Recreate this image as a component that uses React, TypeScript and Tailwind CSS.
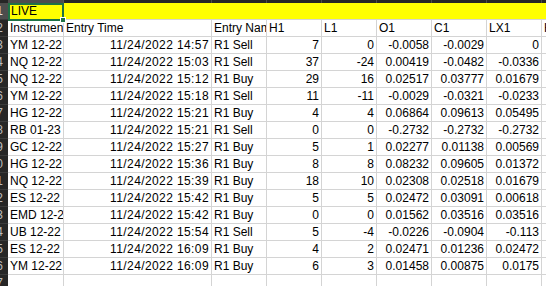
import React from "react";

const rows: string[][] = [
  ["YM 12-22", "11/24/2022 14:57", "R1 Sell", "7", "0", "-0.0058", "-0.0029", "0"],
  ["NQ 12-22", "11/24/2022 15:03", "R1 Sell", "37", "-24", "0.00419", "-0.0482", "-0.0336"],
  ["NQ 12-22", "11/24/2022 15:12", "R1 Buy", "29", "16", "0.02517", "0.03777", "0.01679"],
  ["YM 12-22", "11/24/2022 15:18", "R1 Sell", "11", "-11", "-0.0029", "-0.0321", "-0.0233"],
  ["HG 12-22", "11/24/2022 15:21", "R1 Buy", "4", "4", "0.06864", "0.09613", "0.05495"],
  ["RB 01-23", "11/24/2022 15:21", "R1 Sell", "0", "0", "-0.2732", "-0.2732", "-0.2732"],
  ["GC 12-22", "11/24/2022 15:27", "R1 Buy", "5", "1", "0.02277", "0.01138", "0.00569"],
  ["HG 12-22", "11/24/2022 15:36", "R1 Buy", "8", "8", "0.08232", "0.09605", "0.01372"],
  ["NQ 12-22", "11/24/2022 15:39", "R1 Buy", "18", "10", "0.02308", "0.02518", "0.01679"],
  ["ES 12-22", "11/24/2022 15:42", "R1 Buy", "5", "5", "0.02472", "0.03091", "0.00618"],
  ["EMD 12-22", "11/24/2022 15:42", "R1 Buy", "0", "0", "0.01562", "0.03516", "0.03516"],
  ["UB 12-22", "11/24/2022 15:54", "R1 Sell", "5", "-4", "-0.0226", "-0.0904", "-0.113"],
  ["ES 12-22", "11/24/2022 16:09", "R1 Buy", "4", "2", "0.02471", "0.01236", "0.02472"],
  ["YM 12-22", "11/24/2022 16:09", "R1 Buy", "6", "3", "0.01458", "0.00875", "0.0175"],
];

const headers = ["Instrument", "Entry Time", "Entry Name", "H1", "L1", "O1", "C1", "LX1", "HX1"];
const widths = ["w-[56px]", "w-[148px]", "w-[55px]", "w-[55px]", "w-[55px]", "w-[55px]", "w-[55px]", "w-[55px]", "w-[40px]"];

function RowHead({ n, active }: { n: number; active?: boolean }) {
  return (
    <div
      className={
        "w-[8px] shrink-0 h-full flex items-center justify-end overflow-hidden pr-[5px] text-[12px] leading-none border-b border-[#3a3a3a] " +
        (active ? "bg-[#4d4d4d] text-[#e8e8e8]" : "bg-[#262626] text-[#bdbdbd]")
      }
    >
      <span className="shrink-0">{n}</span>
    </div>
  );
}

function Cell({ w, text, right, date }: { w: string; text?: string; right?: boolean; date?: boolean }) {
  return (
    <div
      className={
        w +
        " shrink-0 h-full border-r border-b border-[#d4d4d4] overflow-hidden whitespace-nowrap flex items-center " +
        (right ? "justify-end pr-[2px]" : "justify-start pl-[2px]") +
        (date ? " tracking-[0.4px]" : "")
      }
    >
      <span className="shrink-0">{text}</span>
    </div>
  );
}

export default function App() {
  return (
    <div
      className="w-[546px] h-[286px] overflow-hidden bg-white text-black text-[12px] leading-none flex flex-col"
      style={{ fontFamily: '"Liberation Sans", Arial, sans-serif' }}
    >
      {/* column header strip */}
      <div className="h-[3px] shrink-0 flex bg-[#262626]">
        <div className="w-[8px] shrink-0" />
        <div className="w-[56px] shrink-0 bg-[#4d4d4d] border-r border-[#5a5a5a]" />
        {widths.slice(1).map((w, i) => (
          <div key={i} className={w + " shrink-0 border-r border-[#4a4a4a]"} />
        ))}
      </div>
      {/* row 1 yellow */}
      <div className="h-[17px] shrink-0 flex relative">
        <RowHead n={1} active />
        <div className="flex-1 bg-[#ffff00] border-b border-[#d4d4d4] flex items-center pl-[3px]">LIVE</div>
        <div className="absolute left-[8px] top-0 w-[56px] h-[18px] border-2 border-[#1e7145]" />
        <div className="absolute left-[60px] top-[14px] w-[6px] h-[6px] bg-[#1e7145] border border-white" />
      </div>
      {/* header row */}
      <div className="h-[17px] shrink-0 flex">
        <RowHead n={2} />
        {headers.map((h, i) => (
          <Cell key={i} w={widths[i]} text={h} />
        ))}
      </div>
      {rows.map((r, ri) => (
        <div key={ri} className="h-[17px] shrink-0 flex">
          <RowHead n={ri + 3} />
          {r.map((v, ci) => (
            <Cell key={ci} w={widths[ci]} text={v} right={ci === 1 || ci >= 3} date={ci === 1} />
          ))}
          <Cell w={widths[8]} />
        </div>
      ))}
      <div className="h-[17px] shrink-0 flex">
        <RowHead n={17} />
        {widths.map((w, i) => (
          <Cell key={i} w={w} />
        ))}
      </div>
    </div>
  );
}
